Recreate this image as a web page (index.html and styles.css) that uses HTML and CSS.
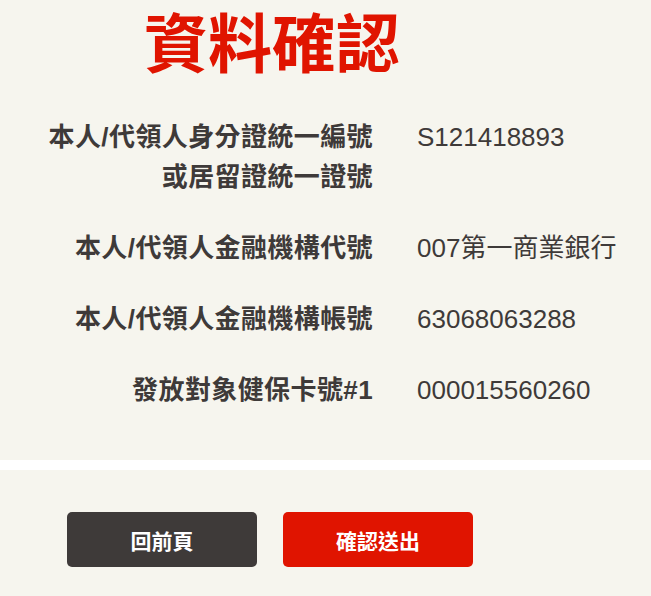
FILE: index.html
```html
<!DOCTYPE html>
<html lang="zh-Hant">
<head>
<meta charset="utf-8">
<title>資料確認</title>
<link rel="stylesheet" href="styles.css">
</head>
<body>
<main class="page">
  <section class="confirm">
    <h1 class="title">資料確認</h1>
    <dl class="info">
      <dt class="label">本人/代領人身分證統一編號<br>或居留證統一證號</dt>
      <dd class="value">S121418893</dd>
      <dt class="label">本人/代領人金融機構代號</dt>
      <dd class="value">007第一商業銀行</dd>
      <dt class="label">本人/代領人金融機構帳號</dt>
      <dd class="value">63068063288</dd>
      <dt class="label">發放對象健保卡號#1</dt>
      <dd class="value">000015560260</dd>
    </dl>
  </section>
  <div class="divider"></div>
  <section class="actions">
    <button class="btn btn-back" type="button">回前頁</button>
    <button class="btn btn-submit" type="button">確認送出</button>
  </section>
</main>
</body>
</html>
```

FILE: styles.css
```css
html, body {
  margin: 0;
  padding: 0;
  background: #f6f5ee;
}

body {
  font-family: "Liberation Sans", "Noto Sans CJK TC", sans-serif;
  color: #3e3a39;
}

.page {
  width: 651px;
  height: 596px;
  overflow: hidden;
}

.confirm {
  padding-top: 1px;
  padding-bottom: 50px;
}

.title {
  margin: 0;
  padding-left: 144px;
  font-family: "Noto Sans CJK TC", sans-serif;
  font-size: 64px;
  line-height: 76px;
  font-weight: 700;
  color: #e01400;
}

.info {
  display: grid;
  grid-template-columns: 373px auto;
  column-gap: 44px;
  row-gap: 31px;
  margin: 40px 0 0 0;
  font-size: 26px;
  line-height: 40px;
}

.label {
  margin: 0;
  text-align: right;
  font-weight: 700;
  letter-spacing: 0.4px;
  color: #3e3a39;
}

.slash {
  font-family: "Noto Sans CJK TC", sans-serif;
}

.value {
  margin: 0;
  font-weight: 400;
  color: #3e3a39;
  white-space: nowrap;
}

.divider {
  height: 10px;
  background: #ffffff;
}

.actions {
  display: flex;
  gap: 26px;
  padding: 42px 0 0 67px;
}

.btn {
  width: 190px;
  height: 55px;
  border: 0;
  border-radius: 5px;
  font-family: "Noto Sans CJK TC", sans-serif;
  font-size: 21px;
  font-weight: 700;
  color: #ffffff;
  padding: 0;
  cursor: pointer;
}

.btn-back {
  background: #3e3a39;
}

.btn-submit {
  background: #e01400;
}
```
